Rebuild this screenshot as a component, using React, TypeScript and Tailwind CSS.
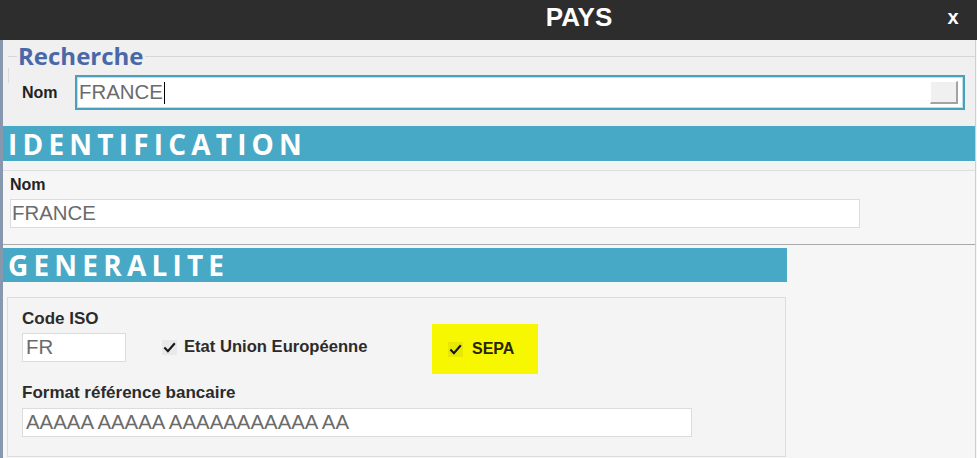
import React from "react";

function Check({ bg = "#e9e9e9" }: { bg?: string }) {
  return (
    <svg width="15" height="15" viewBox="0 0 15 15" className="shrink-0">
      <rect x="0" y="0" width="15" height="15" fill={bg} />
      <path d="M2.4 7.6 L5.9 11.2 L12.8 3.2" fill="none" stroke="#151515" strokeWidth="2.1" />
    </svg>
  );
}

export default function App() {
  return (
    <div className="w-[977px] h-[458px] overflow-hidden bg-[#f6f6f6] flex flex-col font-['Liberation_Sans',Arial,sans-serif]">
      {/* Title bar */}
      <div className="h-[40px] shrink-0 bg-[#2d2d2d] flex items-start text-white font-bold">
        <div className="flex-1 pl-[220px] text-center text-[26px] leading-[34px]">PAYS</div>
        <div className="w-[30px] mr-[9px] text-center text-[20px] leading-[34px]">x</div>
      </div>

      <div className="flex flex-1 min-h-0">
        <div className="w-[3px] bg-[#8797ad]" />
        <div className="w-[973px] flex flex-col border-r border-[#cfcfcf]">
          {/* Recherche */}
          <div className="h-[86px] shrink-0 bg-[#f0f0f0] pt-[4px] pl-[5px]">
            <div className="flex items-center h-[24px]">
              <div className="w-[9px] h-px bg-[#d6d6d6]" />
              <div className="px-[1px] font-['Open_Sans',sans-serif] font-bold text-[24px] leading-[24px] text-[#4a68a8]">
                Recherche
              </div>
              <div className="flex-1 h-px bg-[#d6d6d6]" />
            </div>
            <div className="border-l border-[#dadada] h-[15px]" />
            <div className="flex items-center -mt-[8px]">
              <div className="w-[67px] pl-[14px] text-[16px] font-bold text-[#222]">Nom</div>
              <div className="w-[890px] h-[35px] bg-white border-2 border-[#4a9fbb] shadow-[inset_0_0_0_1px_#bcdfe9] flex items-center pl-[2px] pr-[5px]">
                <span className="text-[20.4px] leading-none text-[#6b6b6b]">FRANCE</span>
                <span className="w-px h-[22px] bg-black ml-[1px]" />
                <div className="ml-auto w-[28px] h-[23px] bg-[#f0f0f0] border-t border-l border-white border-r-2 border-b-2 border-r-[#a3a3a3] border-b-[#a3a3a3]" />
              </div>
            </div>
          </div>

          {/* Identification */}
          <div className="h-[35px] shrink-0 bg-[#48a9c6] flex items-center pl-[5px]">
            <span className="font-['Open_Sans',sans-serif] font-bold text-[28px] leading-none tracking-[5.2px] text-white">
              IDENTIFICATION
            </span>
          </div>
          <div className="h-[9px] shrink-0 bg-[#f3f3f3] border-t border-[#fbfbfb]" />
          <div className="h-[75px] shrink-0 bg-[#f6f6f6] border-t border-[#dedede] border-b border-b-[#a9a9a9] pt-[5px] pl-[7px]">
            <div className="text-[16px] leading-[18px] font-bold text-[#222]">Nom</div>
            <div className="mt-[5px] w-[850px] h-[29px] bg-white border border-[#dcdcdc] flex items-center pl-[1px]">
              <span className="text-[20.4px] leading-none text-[#6b6b6b]">FRANCE</span>
            </div>
          </div>
          <div className="h-[3px] shrink-0" />

          {/* Generalite */}
          <div className="flex flex-1 min-h-0">
            <div className="w-[784px] flex flex-col">
              <div className="h-[34px] shrink-0 bg-[#48a9c6] flex items-center pl-[5px]">
                <span className="font-['Open_Sans',sans-serif] font-bold text-[28px] leading-none tracking-[5.2px] text-white">
                  GENERALITE
                </span>
              </div>
              <div className="h-[15px] shrink-0" />
              <div className="ml-[4px] w-[779px] h-[160px] border border-[#dcdcdc] bg-[#f4f4f4] pl-[14px] pt-[12px]">
                <div className="text-[17px] leading-[18px] font-bold text-[#2b2b2b]">Code ISO</div>
                <div className="mt-[5px] flex items-center">
                  <div className="w-[104px] h-[29px] bg-white border border-[#dcdcdc] flex items-center pl-[3px]">
                    <span className="text-[20.4px] leading-none text-[#6b6b6b]">FR</span>
                  </div>
                  <div className="ml-[36px] w-[270px] flex items-center">
                    <Check />
                    <span className="ml-[7px] text-[16.6px] font-bold text-[#2b2b2b]">Etat Union Européenne</span>
                  </div>
                  <div className="w-[106px] h-[50px] -mt-[9px] -mb-[12px] bg-[#f7f700] flex items-center pl-[16px]">
                    <Check bg="#e8e800" />
                    <span className="ml-[9px] text-[16px] font-bold text-[#262600]">SEPA</span>
                  </div>
                </div>
                <div className="mt-[22px] text-[17px] leading-[18px] font-bold text-[#2b2b2b]">
                  Format référence bancaire
                </div>
                <div className="mt-[6px] w-[670px] h-[29px] bg-white border border-[#dcdcdc] flex items-center pl-[3px]">
                  <span className="text-[20.4px] leading-none text-[#6b6b6b]">AAAAA AAAAA AAAAAAAAAAA AA</span>
                </div>
              </div>
            </div>
            <div className="flex-1 bg-[#f6f6f6]" />
          </div>
        </div>
      </div>
    </div>
  );
}
